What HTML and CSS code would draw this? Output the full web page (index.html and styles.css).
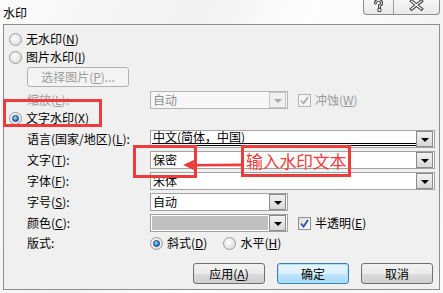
FILE: index.html
```html
<!DOCTYPE html>
<html lang="zh-CN">
<head>
    <meta charset="UTF-8">
    <title>水印</title>
    <link rel="stylesheet" href="styles.css">
</head>
<body>
<div class="dialog">
    <div class="titlebar">
        <span class="title">水印</span>
        <div class="caption-btns">
            <span class="cb help">
                <svg width="29" height="14" viewBox="0 0 29 14">
                    <g fill="none" stroke-linecap="round" stroke-linejoin="round">
                        <path d="M11.5 4 a3 2.6 0 1 1 4 2.4 v1.6" stroke="#3a3a3a" stroke-width="3"/>
                        <circle cx="15.5" cy="11" r="1.2" stroke="#3a3a3a" stroke-width="2"/>
                        <path d="M11.5 4 a3 2.6 0 1 1 4 2.4 v1.6" stroke="#fff" stroke-width="1"/>
                        <circle cx="15.5" cy="11" r="1.2" fill="#fff"/>
                    </g>
                </svg>
            </span>
            <span class="cb close">
                <svg width="46" height="14" viewBox="0 0 46 14">
                    <g stroke-linecap="square">
                        <path d="M18 2 L28 10 M28 2 L18 10" stroke="#3a3a3a" stroke-width="3.4"/>
                        <path d="M18 2 L28 10 M28 2 L18 10" stroke="#fff" stroke-width="1.3"/>
                    </g>
                </svg>
            </span>
        </div>
    </div>

    <div class="panel">
        <div class="row radio-row r-first">
            <span class="radio"></span><span>无水印(<u>N</u>)</span>
        </div>
        <div class="row radio-row">
            <span class="radio"></span><span>图片水印(<u>I</u>)</span>
        </div>
        <div class="pick-btn">选择图片(<u>P</u>)...</div>

        <div class="row field-row r-scale">
            <span class="label disabled">缩放(<u>L</u>):</span>
            <div class="combo narrow off">
                <span class="combo-text">自动</span>
                <span class="drop"></span>
            </div>
            <span class="check off"><svg width="11" height="11" viewBox="0 0 11 11"><path d="M2 5.5 L4.5 8.5 L9 2" fill="none" stroke="#a8a8a8" stroke-width="1.6"/></svg></span>
            <span class="disabled">冲蚀(<u>W</u>)</span>
        </div>

        <div class="row radio-row">
            <span class="radio on"></span><span>文字水印(<u>X</u>)</span>
        </div>

        <div class="row field-row r-combo">
            <span class="label">语言(国家/地区)(<u>L</u>):</span>
            <div class="combo wide">
                <span class="combo-text selected">中文(简体，中国)</span>
                <span class="drop"></span>
            </div>
        </div>
        <div class="row field-row r-combo">
            <span class="label">文字(<u>T</u>):</span>
            <div class="combo wide">
                <span class="combo-text">保密</span>
                <span class="drop"></span>
            </div>
        </div>
        <div class="row field-row r-combo">
            <span class="label">字体(<u>F</u>):</span>
            <div class="combo wide">
                <span class="combo-text">宋体</span>
                <span class="drop"></span>
            </div>
        </div>
        <div class="row field-row r-combo">
            <span class="label">字号(<u>S</u>):</span>
            <div class="combo narrow">
                <span class="combo-text">自动</span>
                <span class="drop"></span>
            </div>
        </div>
        <div class="row field-row r-combo">
            <span class="label">颜色(<u>C</u>):</span>
            <div class="combo narrow">
                <span class="swatch"></span>
                <span class="drop"></span>
            </div>
            <span class="check"><svg width="11" height="11" viewBox="0 0 11 11"><path d="M2 5.5 L4.5 8.5 L9 2" fill="none" stroke="#2a4fa8" stroke-width="1.8"/></svg></span>
            <span>半透明(<u>E</u>)</span>
        </div>
        <div class="row field-row r-layout">
            <span class="label">版式:</span>
            <span class="radio on"></span><span class="opt">斜式(<u>D</u>)</span>
            <span class="radio"></span><span>水平(<u>H</u>)</span>
        </div>

        <div class="buttons">
            <span class="btn">应用(<u>A</u>)</span>
            <span class="btn default">确定</span>
            <span class="btn">取消</span>
        </div>
    </div>

    <!-- annotations drawn over the dialog -->
    <div class="mark mark-radio"></div>
    <div class="mark mark-text"></div>
    <div class="mark mark-note"><span>输入水印文本</span></div>
    <svg class="arrow" width="64" height="16" viewBox="0 0 64 16">
        <path d="M12 7 L61 6.6 L61 9.2 L12 9.4 Z" fill="#ee3b3b"/>
        <path d="M3 8 L15 2.5 L13 8 L15 13.5 Z" fill="#ee3b3b"/>
    </svg>
</div>
</body>
</html>
```

FILE: styles.css
```css
body {
    margin: 0;
    background: #fff;
    font-family: "Noto Sans CJK SC", "Liberation Sans", sans-serif;
    font-size: 12px;
    color: #000;
}

.dialog {
    position: relative;
    width: 443px;
    height: 293px;
    background: linear-gradient(115deg, #fbfbfb 0%, #f2f2f2 35%, #fdfdfd 55%, #f4f4f4 80%, #fafafa 100%);
}

u {
    text-decoration: underline;
    text-underline-offset: 1px;
}

/* title bar */
.titlebar {
    height: 24px;
    display: flex;
    justify-content: space-between;
    align-items: flex-start;
}

.title {
    padding: 5px 0 0 3px;
    line-height: 16px;
}

.caption-btns {
    display: flex;
    margin-right: 3px;
    margin-top: -1px;
    border: 1px solid #8d8d8d;
    border-top: none;
    border-radius: 0 0 4px 4px;
    background: linear-gradient(#f6f6f6, #e9e9e9);
    height: 15px;
}

.cb {
    display: flex;
}

.cb.help {
    width: 29px;
    border-right: 1px solid #9a9a9a;
}

.cb.close {
    width: 45px;
}

/* main panel */
.panel {
    margin-left: 3px;
    width: 437px;
    height: 266px;
    box-sizing: border-box;
    border: 1px solid #8e8e8e;
    background: #f0f0f0;
    padding-top: 5px;
}

.row {
    display: flex;
    align-items: center;
    height: 18px;
    line-height: 16px;
    white-space: nowrap;
}

.radio-row {
    padding-left: 5px;
}

.radio-row .radio {
    margin-right: 4px;
}

.radio {
    width: 11px;
    height: 11px;
    border-radius: 50%;
    border: 1px solid #9a9a9a;
    background: radial-gradient(circle at 40% 40%, #fdfdfd, #d6d6d6);
    display: flex;
    align-items: center;
    justify-content: center;
    flex: none;
}

.radio.on::after {
    content: "";
    width: 5px;
    height: 5px;
    border-radius: 50%;
    border: 1px solid #1a3f6e;
    background: radial-gradient(circle at 40% 35%, #a8dcfb, #2a82c8 60%, #114d88);
}

.pick-btn {
    margin: 1px 0 0 23px;
    width: 102px;
    height: 20px;
    box-sizing: border-box;
    border: 1px solid #adb2b5;
    border-radius: 3px;
    background: #f4f4f4;
    color: #9c9c9c;
    text-align: center;
    line-height: 18px;
}

.field-row {
    padding-left: 23px;
}

.r-scale {
    margin-top: 4px;
}

.r-combo {
    margin-top: 3px;
}

.r-layout {
    margin-top: 2px;
}

.label {
    width: 123px;
    flex: none;
}

.disabled {
    color: #9a9a9a;
}

/* combo boxes */
.combo {
    height: 18px;
    box-sizing: border-box;
    border: 1px solid #a2a2a2;
    background: #fff;
    display: flex;
    align-items: center;
    flex: none;
}

.combo.wide {
    width: 285px;
}

.combo.narrow {
    width: 138px;
}

.combo-text {
    flex: 1;
    padding-left: 2px;
    height: 16px;
    line-height: 15px;
    overflow: hidden;
}

.combo-text.selected {
    margin-left: 1px;
    padding-left: 1px;
    height: 12px;
    line-height: 12px;
    border-bottom: 3px double #000;
    align-self: flex-start;
    overflow: visible;
}

.drop {
    width: 15px;
    height: 14px;
    margin-right: 1px;
    border: 1px solid #8a8a8a;
    background: linear-gradient(#f2f2f2, #d8d8d8);
    display: flex;
    align-items: center;
    justify-content: center;
    flex: none;
}

.drop::after {
    content: "";
    border-left: 4px solid transparent;
    border-right: 4px solid transparent;
    border-top: 4px solid #000;
    margin-top: 1px;
}

.swatch {
    flex: 1;
    height: 14px;
    margin: 0 1px;
    background: #c0c0c0;
}

.combo.off {
    border-color: #b5b5b5;
    background: #f7f7f7;
}

.combo.off .combo-text {
    color: #8d8d8d;
}

.combo.off .drop {
    border-color: #c4c4c4;
    background: #f0f0f0;
}

.combo.off .drop::after {
    border-top-color: #a8a8a8;
}

/* check boxes */
.check {
    width: 11px;
    height: 11px;
    margin: 0 4px 0 10px;
    border: 1px solid #8e8f8f;
    background: linear-gradient(135deg, #dcdcdc, #fdfdfd);
    display: flex;
    align-items: center;
    justify-content: center;
    flex: none;
}

.check.off {
    border-color: #b4b4b4;
    background: #f4f4f4;
}

.r-layout .radio {
    margin-right: 4px;
}

.opt {
    margin-right: 16px;
}

/* bottom buttons */
.buttons {
    display: flex;
    justify-content: flex-end;
    gap: 12px;
    margin-top: 11px;
    padding-right: 6px;
}

.btn {
    width: 72px;
    height: 21px;
    box-sizing: border-box;
    border: 1px solid #707070;
    border-radius: 3px;
    background: linear-gradient(#f2f2f2 0%, #ebebeb 50%, #dddddd 51%, #cfcfcf 100%);
    text-align: center;
    line-height: 19px;
}

.btn.default {
    border-color: #3c7fb1;
    box-shadow: inset 0 0 0 1px #b2e2f8;
    background: linear-gradient(#eaf6fd 0%, #d9f0fc 50%, #bee6fd 51%, #a7d9f5 100%);
}

/* red annotations */
.mark {
    position: absolute;
    box-sizing: border-box;
    border: 3px solid #ee3b3b;
}

.mark-radio {
    left: 3px;
    top: 99px;
    width: 99px;
    height: 28px;
}

.mark-text {
    left: 133px;
    top: 145px;
    width: 64px;
    height: 33px;
}

.mark-note {
    left: 241px;
    top: 145px;
    width: 110px;
    height: 32px;
    display: flex;
    align-items: center;
    padding-left: 2px;
    color: #ee3b3b;
    font-size: 17px;
    line-height: 20px;
    letter-spacing: -0.3px;
    white-space: nowrap;
}

.arrow {
    position: absolute;
    left: 180px;
    top: 157px;
}
```
